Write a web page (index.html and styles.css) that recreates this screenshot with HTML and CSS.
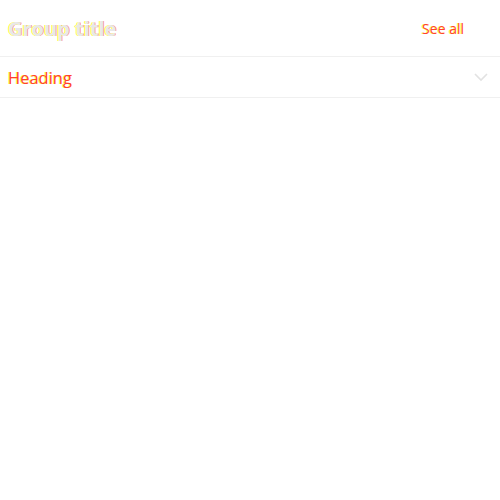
FILE: index.html
```html
<!DOCTYPE html>
<html>
<head>
<meta charset="utf-8">
<link rel="stylesheet" href="styles.css">
</head>
<body>
<div class="group">
  <div class="group-header">
    <h2 class="group-title">Group title</h2>
    <a class="see-all">See all</a>
  </div>
  <div class="row">
    <span class="heading">Heading</span>
    <svg class="chev" width="14" height="9" viewBox="0 0 14 9"><path d="M1 1 L7 7 L13 1" fill="none" stroke="#e2e2e2" stroke-width="1.6"/></svg>
  </div>
</div>
</body>
</html>
```
FILE: styles.css
```css
html, body { margin: 0; padding: 0; background: #fff; }
body { font-family: "Open Sans", "Liberation Sans", sans-serif; }
.group-header {
  height: 56px;
  display: flex;
  align-items: center;
  justify-content: space-between;
  padding: 0 36px 0 8px;
  border-bottom: 1px solid #f0f0f0;
}
.group-title {
  margin: 0;
  font-size: 20px;
  font-weight: 700;
  color: #e8e8e8;
  text-shadow: -1px 0 #ffff40, 1px 0 rgba(255, 40, 40, 0.45);
}
.see-all {
  font-size: 14px;
  color: #ff4030;
  text-shadow: -1px 0 #ffff40;
}
.row {
  height: 40px;
  display: flex;
  align-items: center;
  justify-content: space-between;
  padding: 0 12px 0 8px;
  border-bottom: 1px solid #f0f0f0;
}
.heading {
  font-size: 16.5px;
  color: #ff4030;
  text-shadow: -1px 0 #ffff40;
}
.chev { display: block; }
```
